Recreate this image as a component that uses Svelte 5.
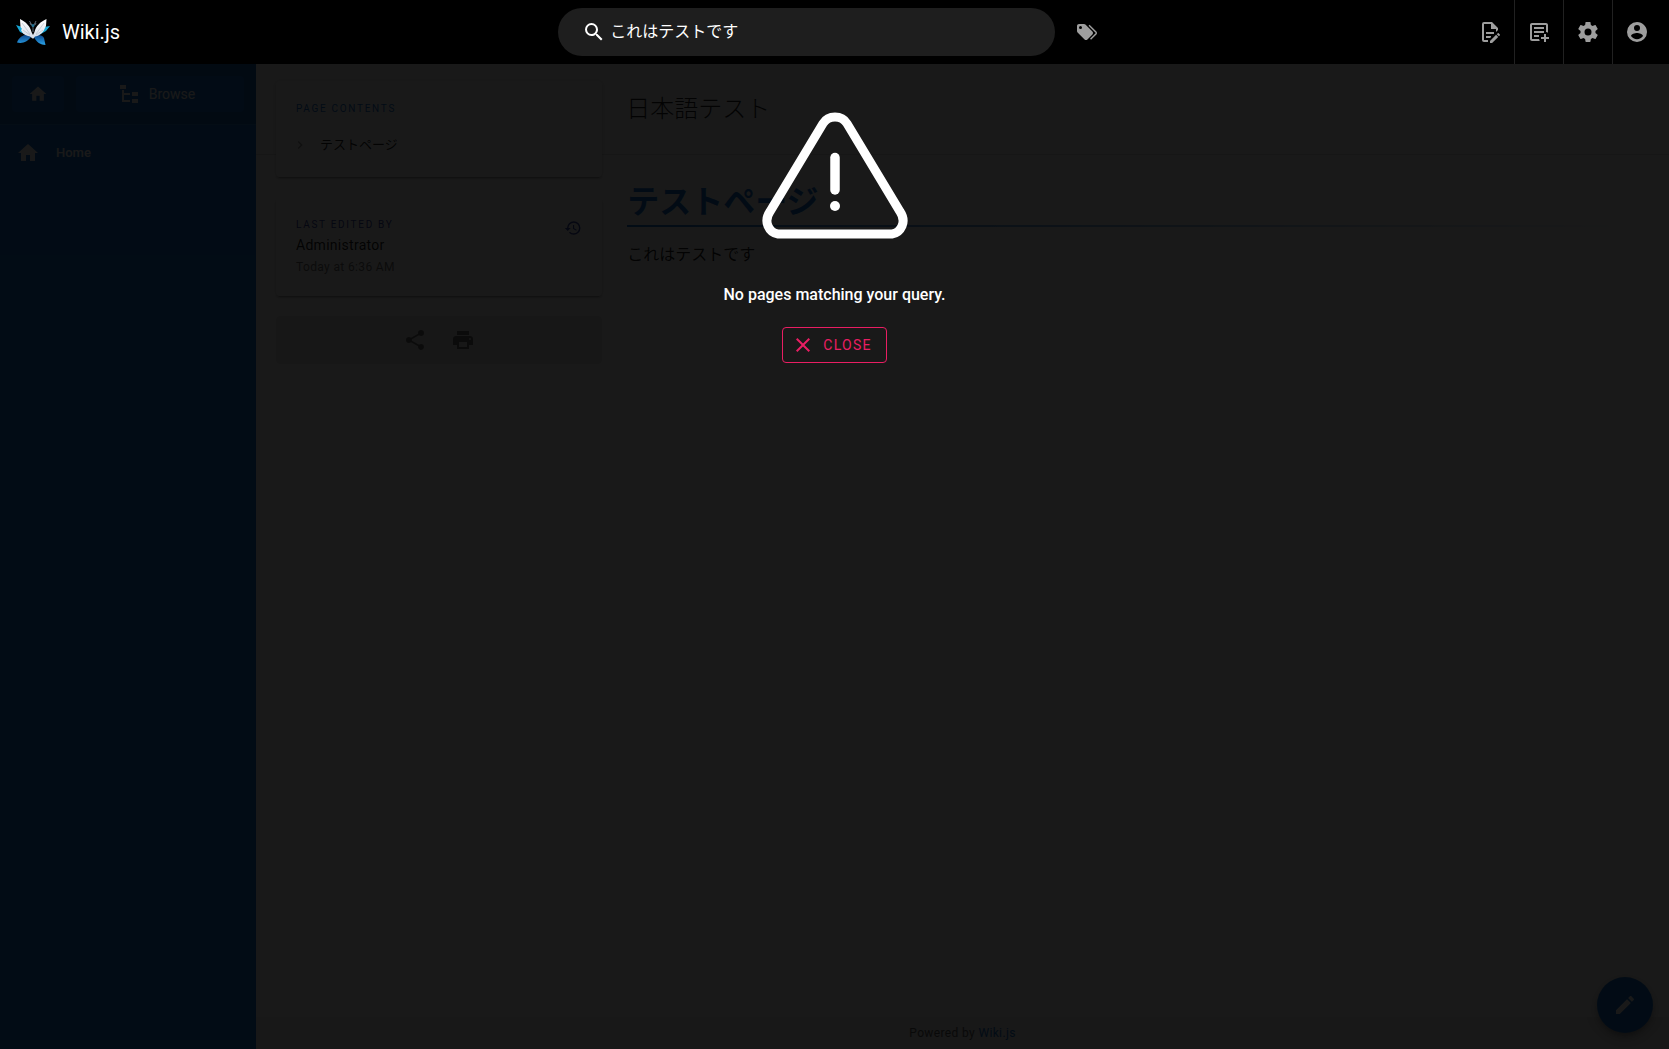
<script>
  const icons = {
    home: 'M10,20V14H14V20H19V12H22L12,3L2,12H5V20H10Z',
    tree: 'M3,3H9V7H3V3M15,10H21V14H15V10M15,17H21V21H15V17M13,13H7V18H13V20H5V8H7V11H13V13Z',
    search: 'M9.5,3A6.5,6.5 0 0,1 16,9.5C16,11.11 15.41,12.59 14.44,13.73L14.71,14H15.5L20.5,19L19,20.5L14,15.5V14.71L13.73,14.44C12.59,15.41 11.11,16 9.5,16A6.5,6.5 0 0,1 3,9.5A6.5,6.5 0 0,1 9.5,3M9.5,5C7,5 5,7 5,9.5C5,12 7,14 9.5,14C12,14 14,12 14,9.5C14,7 12,5 9.5,5Z',
    tags: 'M5.5,9A1.5,1.5 0 0,0 7,7.5A1.5,1.5 0 0,0 5.5,6A1.5,1.5 0 0,0 4,7.5A1.5,1.5 0 0,0 5.5,9M17.41,11.58C17.77,11.94 18,12.44 18,13C18,13.55 17.78,14.05 17.41,14.41L12.41,19.41C12.05,19.77 11.55,20 11,20C10.45,20 9.95,19.78 9.58,19.41L2.59,12.42C2.22,12.05 2,11.55 2,11V6C2,4.89 2.89,4 4,4H9C9.55,4 10.05,4.22 10.41,4.58L17.41,11.58M13.54,5.71L14.54,4.71L21.41,11.58C21.78,11.94 22,12.45 22,13C22,13.55 21.78,14.05 21.42,14.41L16.04,19.79L15.04,18.79L20.75,13L13.54,5.71Z',
    edit: 'M8,12H16V14H8V12M10,20H6V4H13V9H18V12.1L20,10.1V8L14,2H6A2,2 0 0,0 4,4V20A2,2 0 0,0 6,22H10V20M8,18H12.1L13,17.1V16H8V18M20.2,13C20.3,13 20.5,13.1 20.6,13.2L21.9,14.5C22.1,14.7 22.1,15.1 21.9,15.3L20.9,16.3L18.8,14.2L19.8,13.2C19.9,13.1 20,13 20.2,13M20.2,16.9L14.1,23H12V20.9L18.1,14.8L20.2,16.9Z',
    add: 'M5,3C3.9,3 3,3.9 3,5V19C3,20.1 3.9,21 5,21H12.8C12.4,20.4 12.2,19.7 12.1,19H5V5H19V12.1C19.7,12.2 20.4,12.4 21,12.8V5C21,3.9 20.1,3 19,3H5M7,7V9H17V7H7M7,11V13H17V11H7M7,15V17H12V15H7M17,14V17H14V19H17V22H19V19H22V17H19V14H17Z',
    cog: 'M12,15.5A3.5,3.5 0 0,1 8.5,12A3.5,3.5 0 0,1 12,8.5A3.5,3.5 0 0,1 15.5,12A3.5,3.5 0 0,1 12,15.5M19.43,12.97C19.47,12.65 19.5,12.33 19.5,12C19.5,11.67 19.47,11.34 19.43,11L21.54,9.37C21.73,9.22 21.78,8.95 21.66,8.73L19.66,5.27C19.54,5.05 19.27,4.96 19.05,5.05L16.56,6.05C16.04,5.66 15.5,5.32 14.87,5.07L14.5,2.42C14.46,2.18 14.25,2 14,2H10C9.75,2 9.54,2.18 9.5,2.42L9.13,5.07C8.5,5.32 7.96,5.66 7.44,6.05L4.95,5.05C4.73,4.96 4.46,5.05 4.34,5.27L2.34,8.73C2.21,8.95 2.27,9.22 2.46,9.37L4.57,11C4.53,11.34 4.5,11.67 4.5,12C4.5,12.33 4.53,12.65 4.57,12.97L2.46,14.63C2.27,14.78 2.21,15.05 2.34,15.27L4.34,18.73C4.46,18.95 4.73,19.03 4.95,18.95L7.44,17.94C7.96,18.34 8.5,18.68 9.13,18.93L9.5,21.58C9.54,21.82 9.75,22 10,22H14C14.25,22 14.46,21.82 14.5,21.58L14.87,18.93C15.5,18.67 16.04,18.34 16.56,17.94L19.05,18.95C19.27,19.03 19.54,18.95 19.66,18.73L21.66,15.27C21.78,15.05 21.73,14.78 21.54,14.63L19.43,12.97Z',
    account: 'M12,19.2C9.5,19.2 7.29,17.92 6,16C6.03,14 10,12.9 12,12.9C14,12.9 17.97,14 18,16C16.71,17.92 14.5,19.2 12,19.2M12,5A3,3 0 0,1 15,8A3,3 0 0,1 12,11A3,3 0 0,1 9,8A3,3 0 0,1 12,5M12,2A10,10 0 0,0 2,12A10,10 0 0,0 12,22A10,10 0 0,0 22,12C22,6.47 17.5,2 12,2Z',
    history: 'M13.5,8H12V13L16.28,15.54L17,14.33L13.5,12.25V8M13,3A9,9 0 0,0 4,12H1L4.96,16.03L9,12H6A7,7 0 0,1 13,5A7,7 0 0,1 20,12A7,7 0 0,1 13,19C11.07,19 9.32,18.21 8.06,16.94L6.64,18.36C8.27,20 10.5,21 13,21A9,9 0 0,0 22,12A9,9 0 0,0 13,3',
    share: 'M18,16.08C17.24,16.08 16.56,16.38 16.04,16.85L8.91,12.7C8.96,12.47 9,12.24 9,12C9,11.76 8.96,11.53 8.91,11.3L15.96,7.19C16.5,7.69 17.21,8 18,8A3,3 0 0,0 21,5A3,3 0 0,0 18,2A3,3 0 0,0 15,5C15,5.24 15.04,5.47 15.09,5.7L8.04,9.81C7.5,9.31 6.79,9 6,9A3,3 0 0,0 3,12A3,3 0 0,0 6,15C6.79,15 7.5,14.69 8.04,14.19L15.16,18.34C15.11,18.55 15.08,18.77 15.08,19C15.08,20.61 16.39,21.91 18,21.91C19.61,21.91 20.92,20.61 20.92,19A2.92,2.92 0 0,0 18,16.08Z',
    printer: 'M18,3H6V7H18M19,12A1,1 0 0,1 18,11A1,1 0 0,1 19,10A1,1 0 0,1 20,11A1,1 0 0,1 19,12M16,19H8V14H16M19,8H5A3,3 0 0,0 2,11V17H6V21H18V17H22V11A3,3 0 0,0 19,8Z',
    pencil: 'M20.71,7.04C21.1,6.65 21.1,6 20.71,5.63L18.37,3.29C18,2.9 17.35,2.9 16.96,3.29L15.12,5.12L18.87,8.87M3,17.25V21H6.75L17.81,9.93L14.06,6.18L3,17.25Z',
    close: 'M19,6.41L17.59,5L12,10.59L6.41,5L5,6.41L10.59,12L5,17.59L6.41,19L12,13.41L17.59,19L19,17.59L13.41,12L19,6.41Z',
    chevron: 'M8.59,16.58L13.17,12L8.59,7.41L10,6L16,12L10,18L8.59,16.58Z'
  };
  const actions = [
    { icon: 'edit', label: 'Page actions' },
    { icon: 'add', label: 'New page' },
    { icon: 'cog', label: 'Administration' },
    { icon: 'account', label: 'Account' }
  ];
  let query = $state('これはテストです');
  let searching = $state(true);
</script>

{#snippet icon(name)}
  <svg class="icon" viewBox="0 0 24 24" aria-hidden="true"><path fill-rule="evenodd" d={icons[name]} /></svg>
{/snippet}

<div class="app">
  <header class="topbar">
    <div class="brand">
      <svg class="logo" viewBox="0 0 34 28" aria-hidden="true">
        <defs>
          <linearGradient id="lower" x1="0" y1="0" x2="0" y2="1">
            <stop offset="0" stop-color="#0b4388" /><stop offset="1" stop-color="#2aa4ea" />
          </linearGradient>
          <linearGradient id="upper" x1="0" y1="0" x2="0" y2="1">
            <stop offset="0" stop-color="#ffffff" /><stop offset="1" stop-color="#d5dbe6" />
          </linearGradient>
        </defs>
        <path fill="#16a5d4" d="M0 7L6 9L11 17L4 14ZM34 8L28 9L23 17L30 13Z" />
        <path fill="url(#lower)" d="M13 17C8 16 3 19 1 24.500C6 26 12 24 15.500 18ZM18 18C21 16 27 17 28 20L29.500 27C25 27 20 24 18 19Z" />
        <path fill="url(#upper)" d="M4 1C10 4 14 8 15.500 14L17 17L18.500 14C20 8 24 4 30.500 1L30 8L28.500 11C27 15 23 18 19 18.500L17.500 20.500H16.500L14 18.500C10 18 7 16 6 14L5 12L6 11L4.500 9Z" />
        <path fill="none" stroke="#a3acb9" stroke-width="0.500" d="M6 5L14 16M28 5L20 16M7 12L14 17M27 12L20 17" />
        <path fill="none" stroke="#71808f" stroke-width="0.800" d="M17 14V9L13.500 3M17 9L20 3M15 7L14 5M19 7L20 5" />
        <circle cx="17" cy="7.500" r="1.500" fill="#216f90" />
      </svg>
      <span class="site">Wiki.js</span>
    </div>
    <div class="finder">
      <label class="search">
        {@render icon('search')}
        <input type="text" aria-label="Search" bind:value={query} />
      </label>
      <button class="tool" aria-label="Browse by tags">{@render icon('tags')}</button>
    </div>
    <div class="actions">
      {#each actions as a}
        <button class="tool" aria-label={a.label}>{@render icon(a.icon)}</button>
      {/each}
    </div>
  </header>

  <div class="body">
    <nav class="drawer">
      <div class="switcher">
        <button class="nav-btn square" aria-label="Home page">{@render icon('home')}</button>
        <button class="nav-btn wide">{@render icon('tree')}<span>Browse</span></button>
      </div>
      <a class="nav-item" href="#home">{@render icon('home')}<span>Home</span></a>
    </nav>

    <div class="page">
      <main class="layout">
        <div class="page-head"><h2>日本語テスト</h2></div>
        <aside class="side">
          <section class="card">
            <h3 class="overline blue">Page Contents</h3>
            <a class="toc" href="#test">{@render icon('chevron')}<span>テストページ</span></a>
          </section>
          <section class="card author">
            <div>
              <h3 class="overline indigo">Last edited by</h3>
              <p class="name">Administrator</p>
              <p class="when">Today at 6:36 AM</p>
            </div>
            <button class="history" aria-label="History">{@render icon('history')}</button>
          </section>
          <section class="card flat">
            <button aria-label="Share">{@render icon('share')}</button>
            <button aria-label="Print">{@render icon('printer')}</button>
          </section>
        </aside>
        <article class="content">
          <h1 id="test">テストページ</h1>
          <p>これはテストです</p>
        </article>
      </main>
      <footer>Powered by&nbsp;<a href="#wiki">Wiki.js</a></footer>
    </div>
    <button class="fab" aria-label="Edit">{@render icon('pencil')}</button>

    {#if searching}
      <div class="overlay" role="dialog" aria-label="Search results">
        <svg class="warning" viewBox="0 0 146 128" aria-hidden="true">
          <path fill="none" stroke="#fff" stroke-width="9" d="M61 11.500Q65 5 73 5T85 11.500L138 99.500Q143 107 140 114T130 122H16Q9 121 6 114T8 99.500Z" />
          <path stroke="#fff" stroke-width="9.500" stroke-linecap="round" d="M73 45.500V78" />
          <circle cx="73" cy="94" r="5" fill="#fff" />
        </svg>
        <p class="message">No pages matching your query.</p>
        <button class="close" onclick={() => (searching = false)}>{@render icon('close')}<span>Close</span></button>
      </div>
    {/if}
  </div>
</div>

<style>
  :global(body) {
    margin: 0;
    background: #fff;
  }
  .app {
    min-height: 100vh;
    display: flex;
    flex-direction: column;
    font-family: Roboto, 'Noto Sans CJK JP', sans-serif;
    font-size: 16px;
    line-height: 24px;
    color: rgba(0, 0, 0, 0.87);
  }
  .app * {
    box-sizing: border-box;
  }
  h1, h2, h3, p {
    margin: 0;
    font-weight: 400;
  }
  button {
    border: 0;
    margin: 0;
    padding: 0;
    background: none;
    color: inherit;
    font: inherit;
    display: flex;
    align-items: center;
    justify-content: center;
    cursor: pointer;
  }
  a {
    color: inherit;
    text-decoration: none;
  }
  .icon {
    width: 24px;
    height: 24px;
    flex: none;
    fill: currentColor;
  }

  .topbar {
    height: 64px;
    background: #000;
    color: #fff;
    display: grid;
    grid-template-columns: 1fr 1fr 1fr;
    align-items: center;
  }
  .brand {
    display: flex;
    align-items: center;
    gap: 12px;
    padding-left: 16px;
  }
  .logo {
    width: 34px;
    height: 28px;
  }
  .site {
    font-size: 20px;
  }
  .finder {
    display: flex;
    align-items: center;
    gap: 8px;
    padding: 0 2px;
  }
  .search {
    flex: 1;
    height: 48px;
    border-radius: 24px;
    background: #1e1e1e;
    display: flex;
    align-items: center;
    gap: 4px;
    padding: 0 24px;
  }
  .search input {
    flex: 1;
    min-width: 0;
    border: 0;
    outline: 0;
    padding: 0;
    background: none;
    color: #fff;
    font: inherit;
  }
  .tool {
    width: 48px;
    height: 64px;
    color: #9e9e9e;
  }
  .actions {
    display: flex;
    justify-content: flex-end;
    padding-right: 8px;
  }
  .actions .tool + .tool {
    width: 49px;
    border-left: 1px solid #212121;
  }

  .body {
    position: relative;
    flex: 1;
    display: flex;
  }
  .drawer {
    width: 256px;
    flex: none;
    background: #1976d2;
    color: #fff;
  }
  .switcher {
    display: flex;
    gap: 12px;
    padding: 12px;
    background: #1463b3;
    border-bottom: 1px solid #2a80d6;
  }
  .nav-btn {
    height: 36px;
    border-radius: 4px;
    background: #1976d2;
    font-size: 14px;
    gap: 8px;
  }
  .square {
    width: 52px;
  }
  .square .icon {
    width: 20px;
    height: 20px;
  }
  .wide {
    flex: 1;
    padding-right: 8px;
  }
  .nav-item {
    display: flex;
    align-items: center;
    gap: 16px;
    height: 56px;
    padding-left: 16px;
    font-size: 13px;
    font-weight: 500;
  }

  .page {
    flex: 1;
    min-width: 0;
    display: flex;
    flex-direction: column;
  }
  .layout {
    flex: 1;
    display: grid;
    grid-template-columns: calc(25% + 18px) 1fr;
    grid-template-rows: auto 1fr;
  }
  .page-head {
    grid-area: 1 / 1 / 2 / 3;
    display: grid;
    grid-template-columns: calc(25% + 17px) 1fr;
    align-items: center;
    height: 91px;
    background: #fafafa;
    border-bottom: 1px solid #e0e0e0;
  }
  h2 {
    grid-column: 2;
    font-size: 24px;
    line-height: 32px;
    font-weight: 300;
  }
  .side {
    grid-area: 1 / 1 / 3 / 2;
    display: flex;
    flex-direction: column;
    gap: 20px;
    padding: 17px 25px 0 20px;
  }
  .card {
    border-radius: 4px;
    background: #fff;
    padding: 20px;
    box-shadow: 0 3px 1px -2px rgba(0, 0, 0, 0.2), 0 2px 2px rgba(0, 0, 0, 0.14), 0 1px 5px rgba(0, 0, 0, 0.12);
  }
  .overline {
    font-size: 10px;
    line-height: 16px;
    font-weight: 400;
    letter-spacing: 0.17em;
    text-transform: uppercase;
  }
  .blue {
    color: #1976d2;
  }
  .indigo {
    color: #3949ab;
  }
  .toc {
    display: flex;
    align-items: center;
    gap: 12px;
    margin-left: -4px;
    padding-top: 16px;
    font-size: 13px;
  }
  .toc .icon {
    width: 16px;
    height: 16px;
    color: #9e9e9e;
  }
  .author {
    display: flex;
    justify-content: space-between;
    align-items: center;
    padding: 20px 20px 19px;
  }
  .name {
    font-size: 14px;
    line-height: 24px;
    letter-spacing: 0.02em;
  }
  .when {
    font-size: 12px;
    line-height: 20px;
    letter-spacing: 0.03em;
    color: #757575;
  }
  .history {
    align-self: flex-start;
    padding-top: 2px;
    color: #3949ab;
  }
  .history .icon {
    width: 18px;
    height: 18px;
  }
  .flat {
    display: flex;
    justify-content: center;
    gap: 24px;
    padding: 12px;
    background: #e8e8e8;
    box-shadow: none;
    color: #757575;
  }
  .content {
    padding: 24px 24px 0 0;
  }
  h1 {
    font-size: 32px;
    line-height: 46px;
    font-weight: 700;
    color: #1976d2;
    border-bottom: 2px solid;
    border-image: linear-gradient(to right, #1976d2, rgba(25, 118, 210, 0)) 1;
  }
  .content p {
    padding-top: 16px;
  }
  footer {
    display: flex;
    align-items: center;
    justify-content: center;
    height: 32px;
    background: #eee;
    font-size: 12px;
    letter-spacing: 0.03em;
    color: #616161;
  }
  footer a {
    color: #1976d2;
  }
  .fab {
    position: absolute;
    right: 16px;
    bottom: 16px;
    width: 56px;
    height: 56px;
    border-radius: 50%;
    background: #1976d2;
    color: #fff;
    box-shadow: 0 3px 5px -1px rgba(0, 0, 0, 0.2), 0 6px 10px rgba(0, 0, 0, 0.14), 0 1px 18px rgba(0, 0, 0, 0.12);
  }

  .overlay {
    position: absolute;
    inset: 0;
    background: rgba(0, 0, 0, 0.9);
    color: #fff;
    display: flex;
    flex-direction: column;
    align-items: center;
    padding-top: 48px;
  }
  .warning {
    width: 146px;
    height: 128px;
  }
  .message {
    padding: 43px 0 20px;
    font-weight: 500;
  }
  .close {
    height: 36px;
    padding: 0 14px 0 8px;
    gap: 8px;
    border: 1px solid #e91e63;
    border-radius: 4px;
    color: #e91e63;
    font-size: 14px;
    letter-spacing: 0.09em;
    text-transform: uppercase;
  }
</style>
